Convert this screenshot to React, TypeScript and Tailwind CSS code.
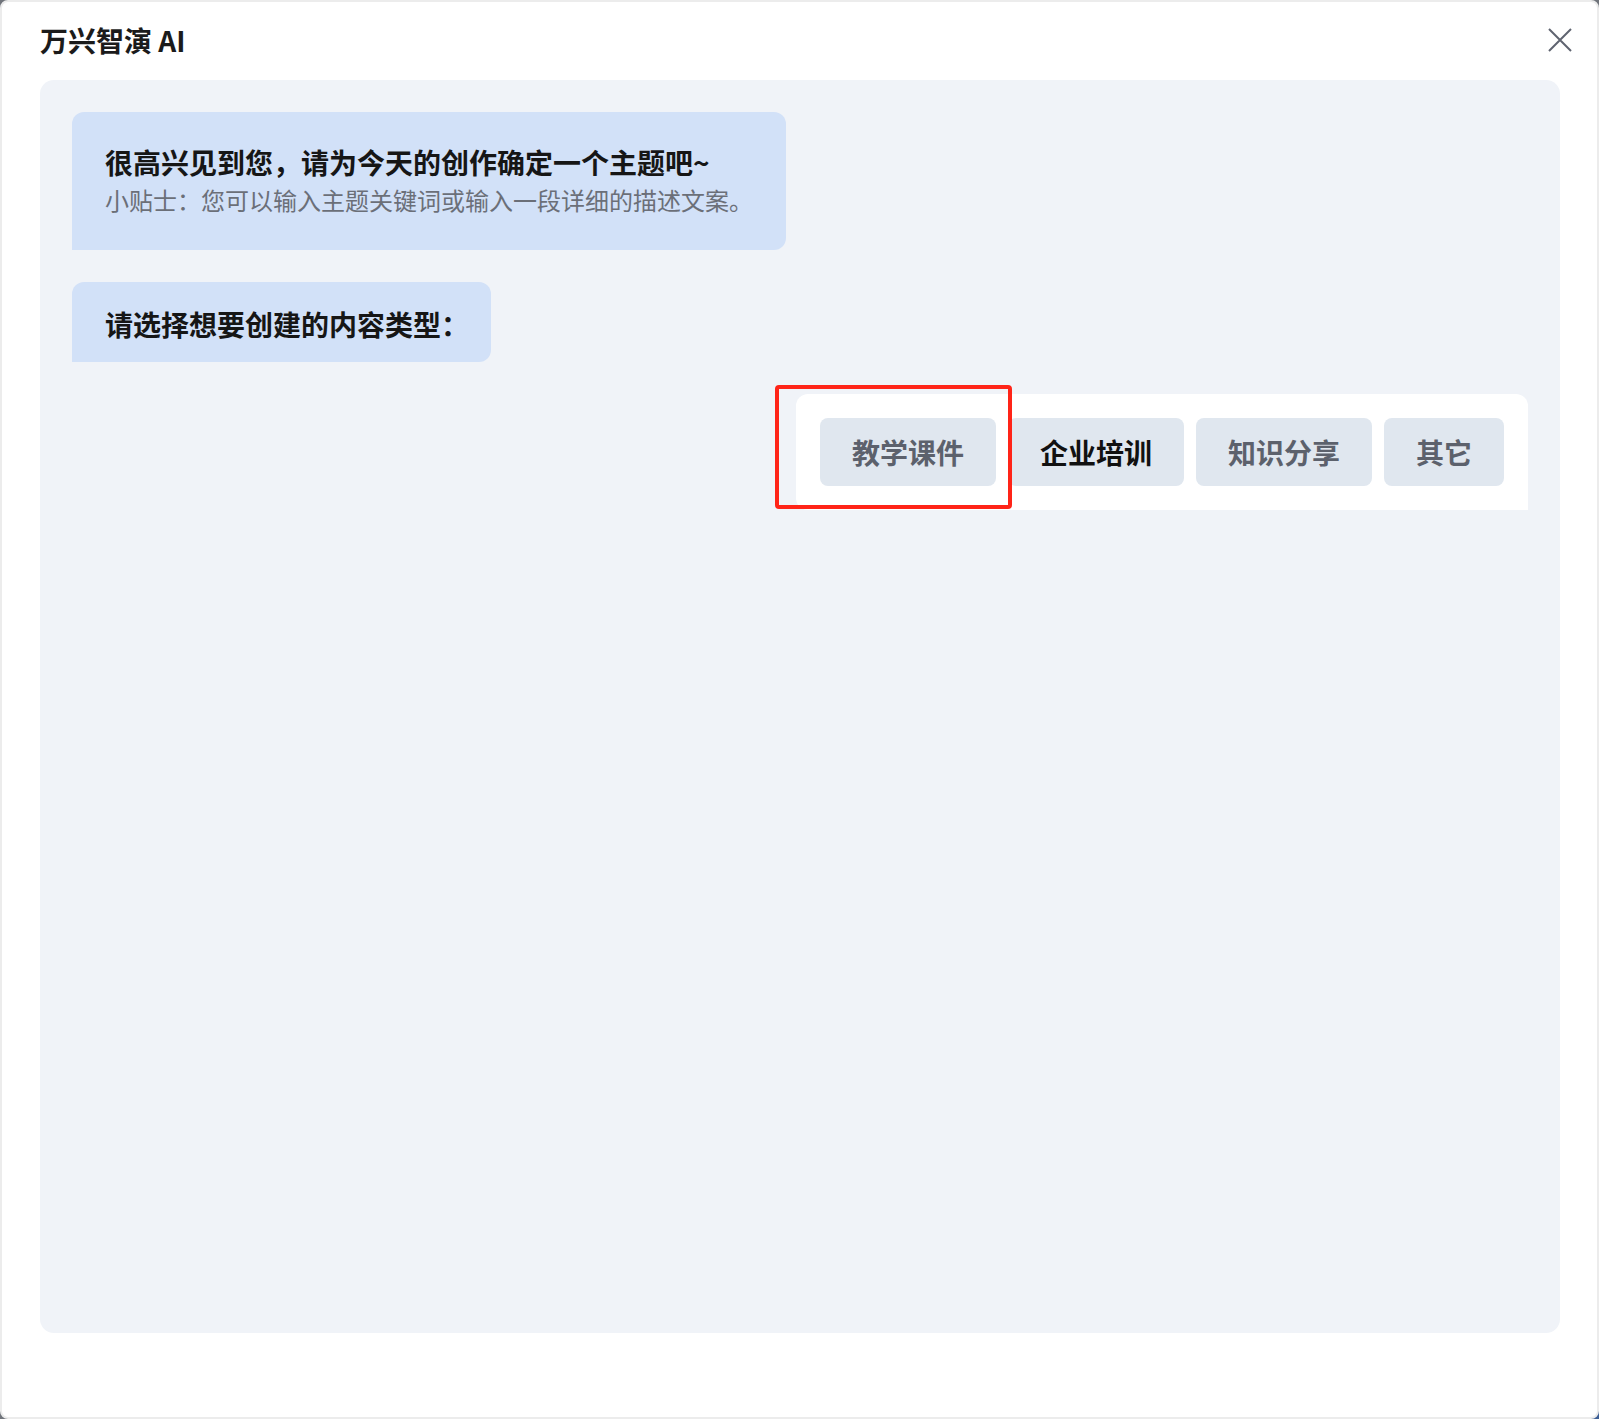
import React from "react";

const font = { fontFamily: '"Noto Sans CJK SC", "Noto Sans", sans-serif' };

const options = [
  { label: "教学课件", active: false, marked: true },
  { label: "企业培训", active: true, marked: false },
  { label: "知识分享", active: false, marked: false },
  { label: "其它", active: false, marked: false },
];

function CloseIcon() {
  return (
    <svg width="24" height="24" viewBox="0 0 24 24" fill="none">
      <path d="M1 1L23 23M23 1L1 23" stroke="#5f6470" strokeWidth="2" />
    </svg>
  );
}

export default function App() {
  return (
    <div className="relative h-[1419px] w-[1599px] bg-[#70747b]" style={font}>
      <div className="absolute bottom-0 right-0 h-3 w-3 bg-[#3d5f96]" />
      <div className="relative flex h-full w-full flex-col rounded-lg border-2 border-[#ececec] bg-white">
        <div className="flex h-[78px] items-center justify-between pb-[3px] pl-[38px] pr-[25px]">
          <h1 className="text-[28px] font-bold leading-10 text-[#1b1b1b]">万兴智演 AI</h1>
          <CloseIcon />
        </div>

        <div className="mx-[38px] flex h-[1253px] w-[1520px] flex-col gap-8 rounded-[14px] bg-[#f0f3f8] p-8">
          <div className="flex w-[714px] flex-col rounded-t-[12px] rounded-br-[12px] bg-[#d2e1f8] pb-[32px] pl-[33px] pt-[30px]">
            <p className="text-[28px] font-bold leading-10 text-[#161616]">
              很高兴见到您，请为今天的创作确定一个主题吧~
            </p>
            <p className="text-[24px] leading-9 text-[#6b6f78]">
              小贴士：您可以输入主题关键词或输入一段详细的描述文案。
            </p>
          </div>

          <div className="flex h-[80px] w-[419px] items-center rounded-t-[12px] rounded-br-[12px] bg-[#d2e1f8] pl-[33px] pt-1">
            <p className="text-[28px] font-bold leading-10 text-[#161616]">请选择想要创建的内容类型：</p>
          </div>

          <div className="flex justify-end">
            <div className="relative flex gap-3 rounded-t-[12px] rounded-bl-[12px] bg-white p-6">
              {options.map((o) => (
                <button
                  key={o.label}
                  className={
                    "flex h-[68px] items-center rounded-lg bg-[#e0e7ef] px-8 text-[28px] font-bold leading-10 " +
                    (o.active ? "text-[#111111]" : "text-[#5c616c]")
                  }
                >
                  {o.label}
                </button>
              ))}
              <div className="pointer-events-none absolute left-[-21px] top-[-9px] h-[124px] w-[237px] rounded-[4px] border-4 border-[#ff2418]" />
            </div>
          </div>
        </div>
      </div>
    </div>
  );
}
